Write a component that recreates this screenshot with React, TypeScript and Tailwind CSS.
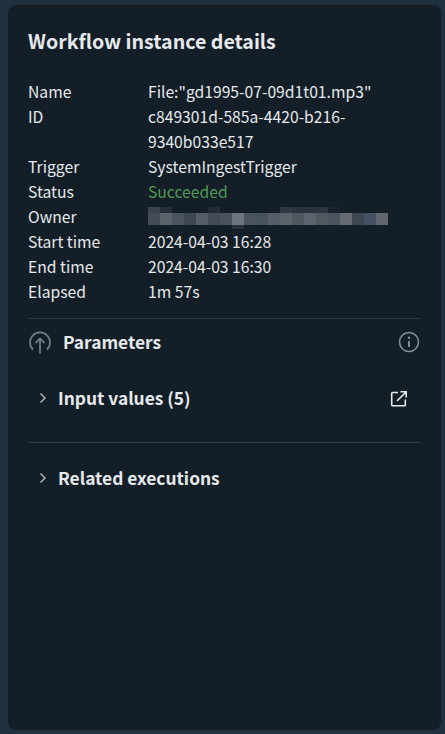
const font = "font-['Noto_Sans_CJK_JP','Noto_Sans',sans-serif]";

const details = [
  { label: "Name", value: 'File:"gd1995-07-09d1t01.mp3"' },
  { label: "ID", value: "c849301d-585a-4420-b216-9340b033e517" },
  { label: "Trigger", value: "SystemIngestTrigger" },
  { label: "Status", value: "Succeeded", className: "text-[#4f9a55]" },
  { label: "Owner", redacted: true },
  { label: "Start time", value: "2024-04-03 16:28" },
  { label: "End time", value: "2024-04-03 16:30" },
  { label: "Elapsed", value: "1m 57s" },
];

// top row of the blurred owner name, mostly faint
const blurTop = [
  "bg-[#3b444e]", "bg-[#262f39]", "bg-transparent", "bg-transparent", "bg-transparent",
  "bg-[#232c36]", "bg-transparent", "bg-transparent", "bg-transparent", "bg-transparent",
  "bg-transparent", "bg-[#2f3843]", "bg-[#2a333d]", "bg-[#2a333d]", "bg-[#2c3540]",
  "bg-[#1b242e]", "bg-transparent", "bg-transparent", "bg-transparent", "bg-transparent",
];

const blurMain = [
  "bg-[#434b55]", "bg-[#5a6169]", "bg-[#4b545e]", "bg-[#3e4751]", "bg-[#555c65]",
  "bg-[#434b55]", "bg-[#4b525b]", "bg-[#6e747e]", "bg-[#4b535d]", "bg-[#47525e]",
  "bg-[#585e67]", "bg-[#5c626a]", "bg-[#50575f]", "bg-[#5d636c]", "bg-[#51585f]",
  "bg-[#4d545d]", "bg-[#666b72]", "bg-[#3e464f]", "bg-[#465063]", "bg-[#62676e]",
];

function Chevron() {
  return (
    <svg width="16" height="16" viewBox="0 0 16 16" fill="none" className="text-[#b4bbc1] shrink-0">
      <path d="M5.5 3.5 L10 8 L5.5 12.5" stroke="currentColor" strokeWidth="1.4" />
    </svg>
  );
}

export default function App() {
  return (
    <div className={`${font} w-[445px] h-[734px] bg-[#1f303e] pt-[5px] pb-1 pl-2 pr-1 overflow-hidden`}>
      <div className="h-full rounded-lg bg-[#141e27] px-5 pt-[17px] text-[#e6e9ec]">
        <h2 className="text-[19.6px] leading-[38px] font-semibold">Workflow instance details</h2>

        <dl className="mt-[19px] text-[15.7px] leading-[25px]">
          {details.map((d) => (
            <div key={d.label} className="flex">
              <dt className="w-[120px] shrink-0">{d.label}</dt>
              <dd className={`w-[240px] ${d.className ?? ""}`}>
                {d.redacted ? (
                  <div className="pt-[3px]">
                    <div className="flex h-[6px]">
                      {blurTop.map((c, i) => (
                        <span key={i} className={`w-3 ${c}`} />
                      ))}
                    </div>
                    <div className="flex h-3">
                      {blurMain.map((c, i) => (
                        <span key={i} className={`w-3 ${c}`} />
                      ))}
                    </div>
                    <div className="ml-[84px] h-1 w-3 bg-[#2a333d]" />
                  </div>
                ) : (
                  d.value
                )}
              </dd>
            </div>
          ))}
        </dl>

        <div className="mt-[14px] border-t border-[#263c4e] flex items-center h-[48px] pb-[1px]">
          <svg width="24" height="24" viewBox="0 0 24 24" fill="none" className="text-[#6e7982] shrink-0 mt-[2px]">
            <path d="M5 18.5 A10 10 0 1 1 19 18.5" stroke="currentColor" strokeWidth="1.8" />
            <path d="M12 22.5 V7.5 M7.5 12 L12 7.5 L16.5 12" stroke="currentColor" strokeWidth="1.8" />
          </svg>
          <span className="ml-[11px] text-[17.35px] font-semibold">Parameters</span>
          <svg width="22" height="22" viewBox="0 0 22 22" fill="none" className="ml-auto mr-[1px] text-[#858e96]">
            <circle cx="11" cy="11" r="9.5" stroke="currentColor" strokeWidth="1.6" />
            <path d="M11 10 V16" stroke="currentColor" strokeWidth="1.9" />
            <circle cx="11" cy="6.8" r="1.2" fill="currentColor" />
          </svg>
        </div>

        <div className="flex items-center h-[40px] mt-[12px] pl-[7px]">
          <Chevron />
          <span className="ml-[7px] text-[17.35px] font-semibold">Input values (5)</span>
          <svg width="18" height="18" viewBox="0 0 18 18" fill="none" className="ml-auto mr-[13px] mt-[1px] text-[#e6e9ec]">
            <path d="M8 2.5 H2.5 A0.8 0.8 0 0 0 1.7 3.3 V15 A0.8 0.8 0 0 0 2.5 15.8 H14.5 A0.8 0.8 0 0 0 15.3 15 V9.5" stroke="currentColor" strokeWidth="1.6" />
            <path d="M10.5 1.8 H16.2 V7.5 M16 2 L7 11" stroke="currentColor" strokeWidth="1.6" />
          </svg>
        </div>

        <div className="mt-[24px] border-t border-[#263c4e] flex items-center h-[72px] pl-[7px] pb-[1px]">
          <Chevron />
          <span className="ml-[7px] text-[17.35px] font-semibold">Related executions</span>
        </div>
      </div>
    </div>
  );
}
